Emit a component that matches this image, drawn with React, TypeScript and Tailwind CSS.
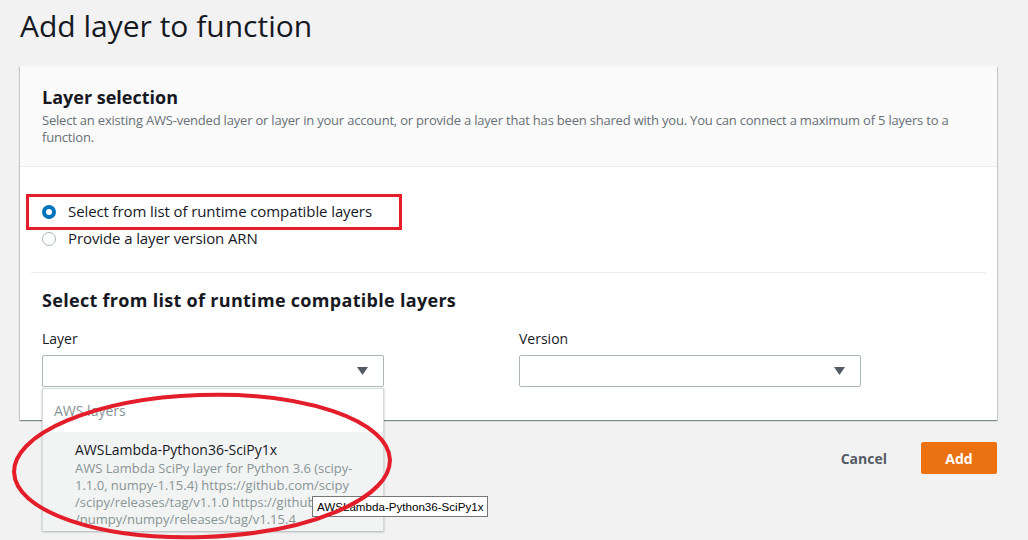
import React from 'react';

function Radio({ checked, label }: { checked?: boolean; label: string }) {
  return (
    <label className="flex items-center h-[27px] text-[15px] text-[#16191f]">
      {checked ? (
        <span className="w-[14px] h-[14px] rounded-full bg-[#0073bb] flex items-center justify-center">
          <span className="w-[6px] h-[6px] rounded-full bg-white" />
        </span>
      ) : (
        <span className="w-[14px] h-[14px] rounded-full border border-[#aab7b8] bg-white" />
      )}
      <span className="ml-[12px] tracking-[-0.1px]">{label}</span>
    </label>
  );
}

function Select({ label }: { label: string }) {
  return (
    <div className="w-[342px]">
      <div className="text-[14px] leading-[20px] text-[#16191f]">{label}</div>
      <div className="mt-[6px] h-[32px] border border-[#aab7b8] rounded-[2px] bg-white flex items-center justify-end pr-[15px]">
        <svg width="11" height="8" viewBox="0 0 11 8">
          <path d="M0 0 H11 L5.5 8 Z" fill="#545b64" />
        </svg>
      </div>
    </div>
  );
}

export default function App() {
  return (
    <div className="relative w-[1028px] h-[540px] overflow-hidden bg-[#f2f2f2] font-['Open_Sans',sans-serif]">
      <h1 className="pl-[20px] pt-[6px] text-[30px] leading-[40px] text-[#16191f]">
        Add layer to function
      </h1>

      <div className="ml-[20px] mt-[20px] w-[977px] bg-white shadow-[0_1px_1px_0_rgba(0,28,36,0.3),1px_1px_1px_0_rgba(0,28,36,0.15),-1px_1px_1px_0_rgba(0,28,36,0.15)]">
        <div className="bg-[#fafafa] border-b border-[#eaeded] px-[22px] pt-[20px] pb-[20px]">
          <h2 className="text-[18px] leading-[22px] font-bold text-[#16191f]">Layer selection</h2>
          <p className="mt-[4px] text-[13px] leading-[17px] text-[#687078] tracking-[-0.2px]">
            Select an existing AWS-vended layer or layer in your account, or provide a layer that has been shared with you. You can connect a maximum of 5 layers to a function.
          </p>
        </div>

        <div className="px-[22px] pt-[31px]">
          <Radio checked label="Select from list of runtime compatible layers" />
          <Radio label="Provide a layer version ARN" />
        </div>

        <div className="mx-[11px] mt-[20px] border-t border-[#eaeded]" />

        <div className="px-[22px] pt-[16px] pb-[33px]">
          <h2 className="text-[18px] leading-[22px] font-bold text-[#16191f] tracking-[0.3px]">
            Select from list of runtime compatible layers
          </h2>
          <div className="mt-[18px] flex gap-[135px]">
            <Select label="Layer" />
            <Select label="Version" />
          </div>
        </div>
      </div>

      <div className="w-[997px] mt-[22px] flex justify-end items-center">
        <button className="text-[14px] font-bold text-[#545b64] mr-[34px]">Cancel</button>
        <button className="w-[76px] h-[32px] rounded-[2px] bg-[#ec7211] text-white text-[14px] font-bold">
          Add
        </button>
      </div>

      {/* open dropdown list */}
      <div className="absolute left-[42px] top-[388px] w-[342px] h-[143px] bg-white border border-[#d5dbdb] shadow-[0_1px_2px_rgba(0,28,36,0.3)]">
        <div className="h-[43px] pl-[11px] pt-[12px] text-[14px] leading-[20px] text-[#879596]">AWS layers</div>
        <div className="bg-[#f2f3f3] h-[99px] pl-[32px] pr-[10px] pt-[8px]">
          <div className="text-[14px] leading-[20px] text-[#16191f]">AWSLambda-Python36-SciPy1x</div>
          <div className="text-[13px] leading-[17px] text-[#879596] w-[300px] break-all">
            AWS Lambda SciPy layer for Python 3.6 (scipy-
            <br />
            1.1.0, numpy-1.15.4) https://github.com/scipy
            <br />
            /scipy/releases/tag/v1.1.0 https://github.com
            <br />
            /numpy/numpy/releases/tag/v1.15.4
          </div>
        </div>
      </div>

      {/* native tooltip */}
      <div className="absolute left-[312px] top-[496px] h-[21px] px-[4px] bg-white border border-[#767676] text-[11.6px] leading-[19px] text-black font-['Liberation_Sans',sans-serif]">
        AWSLambda-Python36-SciPy1x
      </div>

      {/* red annotations */}
      <div className="absolute left-[26px] top-[194px] w-[376px] h-[36px] border-[3px] border-[#e31e2a]" />
      <svg className="absolute left-0 top-0 pointer-events-none" width="1028" height="540">
        <ellipse cx="202" cy="466" rx="188" ry="71" fill="none" stroke="#e31e2a" strokeWidth="4" transform="rotate(-2 202 466)" />
      </svg>
    </div>
  );
}
